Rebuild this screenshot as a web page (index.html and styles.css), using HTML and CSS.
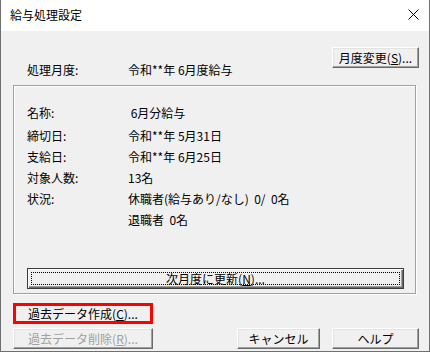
FILE: index.html
```html
<!DOCTYPE html>
<html lang="ja">
<head>
    <meta charset="UTF-8">
    <meta name="viewport" content="width=device-width, initial-scale=1.0">
    <title>給与処理設定</title>
    <link rel="stylesheet" href="styles.css">
</head>
<body>
<div class="window">
  <div class="titlebar">
    <span class="title">給与処理設定</span>
    <svg class="close" width="11" height="11" viewBox="0 0 11 11">
      <path d="M0.5 0.5 L10.5 10.5 M10.5 0.5 L0.5 10.5" stroke="#000" stroke-width="1" fill="none"/>
    </svg>
  </div>
  <div class="dialog-body">
    <div class="month-row">
      <div class="month-field">
        <span class="label">処理月度:</span>
        <span class="value">令和**年 6月度給与</span>
      </div>
      <button class="btn btn-month">月度変更(<u>S</u>)...</button>
    </div>

    <div class="group">
      <div class="row row-name"><span class="label">名称:</span><span class="value">&nbsp;6月分給与</span></div>
      <div class="row"><span class="label">締切日:</span><span class="value">令和**年 5月31日</span></div>
      <div class="row"><span class="label">支給日:</span><span class="value">令和**年 6月25日</span></div>
      <div class="row"><span class="label">対象人数:</span><span class="value">13名</span></div>
      <div class="row">
        <span class="label">状況:</span>
        <span class="value">
          <span class="line">休職者(給与あり/なし)&nbsp; 0/&nbsp; 0名</span>
          <span class="line">退職者&nbsp; 0名</span>
        </span>
      </div>
      <button class="btn btn-default btn-next"><span class="focus">次月度に更新(<u>N</u>)...</span></button>
    </div>

    <button class="btn btn-past btn-marked">過去データ作成(<u>C</u>)...</button>

    <div class="bottom-row">
      <button class="btn btn-past" disabled>過去データ削除(<u>R</u>)...</button>
      <div class="right-buttons">
        <button class="btn btn-cancel">キャンセル</button>
        <button class="btn btn-help">ヘルプ</button>
      </div>
    </div>
  </div>
</div>
</body>
</html>
```

FILE: styles.css
```css
body {
    margin: 0;
    padding: 0;
    background-color: #ffffff;
    font-family: "Noto Sans CJK JP", "Liberation Sans", sans-serif;
    font-size: 12px;
    color: #000000;
}
.window {
    width: 430px;
    height: 352px;
    box-sizing: border-box;
    border: 1px solid #6f6f6f;
    border-top: none;
    background-color: #f0f0f0;
    display: flex;
    flex-direction: column;
}
.titlebar {
    height: 31px;
    background-color: #ffffff;
    display: flex;
    align-items: center;
    justify-content: space-between;
    padding: 0 10px 0 9px;
}
.title {
    font-size: 12px;
    line-height: 16px;
    margin-top: -1px;
}
.close {
    display: block;
    margin-top: -2px;
}
.dialog-body {
    padding: 16px 10px 0 12px;
    display: flex;
    flex-direction: column;
}
.month-row {
    display: flex;
    justify-content: space-between;
    align-items: flex-start;
}
.month-field {
    display: flex;
    margin-top: 15px;
    padding-left: 14px;
    line-height: 16px;
}
.month-field .label {
    width: 101px;
}
.btn {
    font-family: "Noto Sans CJK JP", "Liberation Sans", sans-serif;
    font-size: 12px;
    line-height: 16px;
    color: #000000;
    background-color: #f0f0f0;
    height: 21px;
    padding: 0;
    margin: 0;
    box-sizing: border-box;
    border: 1px solid;
    border-color: #ffffff #696969 #696969 #ffffff;
    box-shadow: inset -1px -1px 0 #a0a0a0, inset 1px 1px 0 #e3e3e3;
    display: flex;
    align-items: center;
    justify-content: center;
}
.btn u {
    text-underline-offset: 1px;
}
.btn-month {
    width: 87px;
}
.group {
    margin-top: 7px;
    width: 403px;
    height: 209px;
    box-sizing: border-box;
    border: 1px solid #a0a0a0;
    box-shadow: inset 1px 1px 0 #ffffff, 1px 1px 0 #ffffff;
    padding: 16px 11px 4px 13px;
    display: flex;
    flex-direction: column;
}
.row {
    display: flex;
    line-height: 21px;
}
.row-name {
    margin-bottom: 2px;
}
.row .label {
    width: 101px;
    flex-shrink: 0;
}
.row .value {
    display: flex;
    flex-direction: column;
}
.btn-default {
    border: 1px solid #3c3c3c;
    box-shadow: inset 1px 1px 0 #ffffff, inset -1px -1px 0 #696969, inset -2px -2px 0 #a0a0a0;
}
.btn-next {
    margin-top: auto;
    width: 377px;
    padding: 3px;
}
.focus {
    flex: 1;
    align-self: stretch;
    border: 1px dotted #000000;
    display: flex;
    align-items: center;
    justify-content: center;
    line-height: 12px;
}
.btn-past {
    width: 140px;
}
.btn-marked {
    margin-top: 9px;
    border: 3px solid #ff0000;
    box-shadow: none;
}
.bottom-row {
    margin-top: 4px;
    display: flex;
    justify-content: space-between;
}
.btn:disabled {
    color: #a0a0a0;
}
.right-buttons {
    display: flex;
    gap: 12px;
}
.btn-cancel {
    width: 83px;
}
.btn-help {
    width: 87px;
}
```
